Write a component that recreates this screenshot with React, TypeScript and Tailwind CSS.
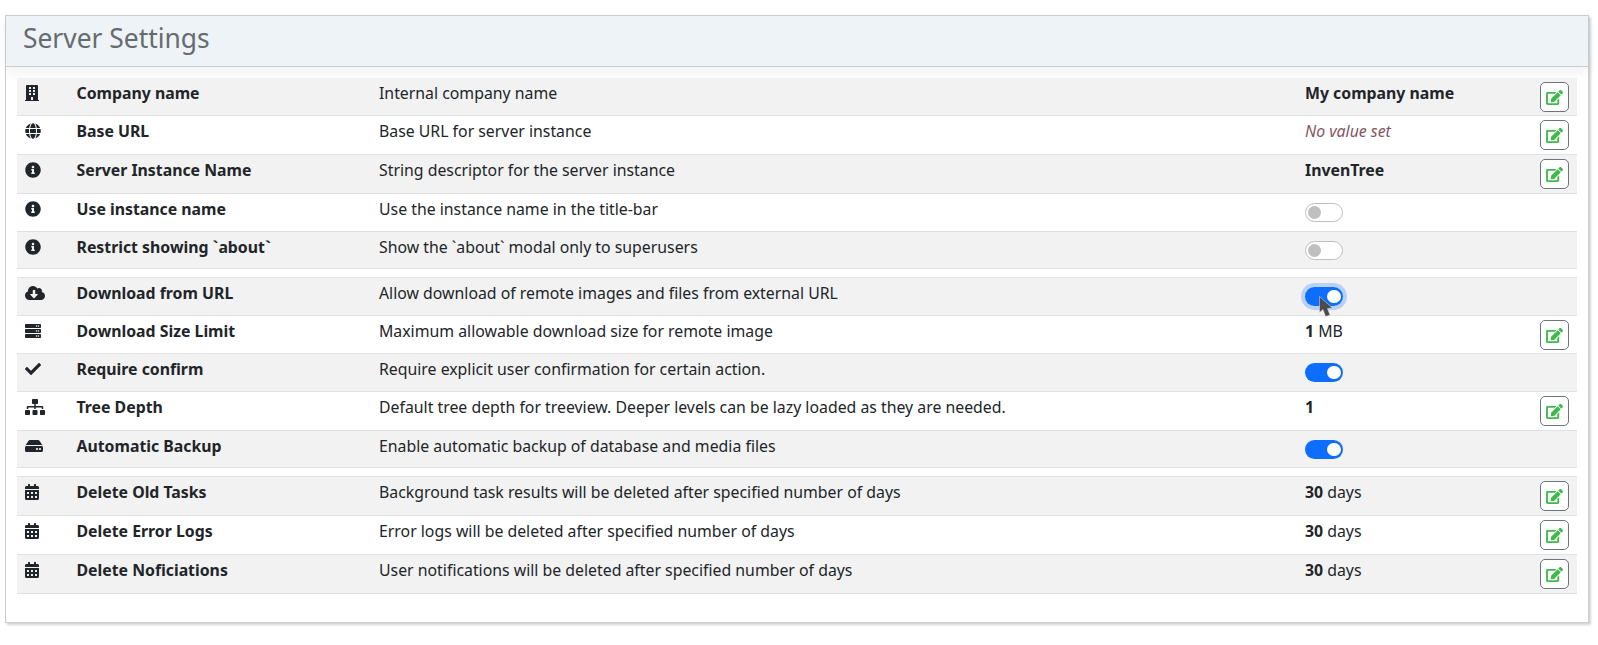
import React from "react";
import { FaBuilding, FaGlobe, FaInfoCircle, FaCloudDownloadAlt, FaServer, FaCheck, FaSitemap, FaHdd, FaCalendarAlt, FaEdit } from "react-icons/fa";

type Row = {
  icon: React.ComponentType<{ className?: string }>;
  iw: string;
  name: string;
  desc: string;
  value?: React.ReactNode;
  toggle?: "off" | "on" | "focus";
  edit?: boolean;
  h: string;
};

const B = ({ children }: { children: React.ReactNode }) => <span className="font-bold">{children}</span>;

const groups: Row[][] = [
  [
    { icon: FaBuilding, iw: "w-[14px]", name: "Company name", desc: "Internal company name", value: <B>My company name</B>, edit: true, h: "h-[38px]" },
    { icon: FaGlobe, iw: "w-[16px]", name: "Base URL", desc: "Base URL for server instance", value: <i className="text-[#85565f]">No value set</i>, edit: true, h: "h-[39px]" },
    { icon: FaInfoCircle, iw: "w-[16px]", name: "Server Instance Name", desc: "String descriptor for the server instance", value: <B>InvenTree</B>, edit: true, h: "h-[39px]" },
    { icon: FaInfoCircle, iw: "w-[16px]", name: "Use instance name", desc: "Use the instance name in the title-bar", toggle: "off", h: "h-[38px]" },
    { icon: FaInfoCircle, iw: "w-[16px]", name: "Restrict showing `about`", desc: "Show the `about` modal only to superusers", toggle: "off", h: "h-[37px]" },
  ],
  [
    { icon: FaCloudDownloadAlt, iw: "w-[20px]", name: "Download from URL", desc: "Allow download of remote images and files from external URL", toggle: "focus", h: "h-[38px]" },
    { icon: FaServer, iw: "w-[16px]", name: "Download Size Limit", desc: "Maximum allowable download size for remote image", value: <><B>1</B> MB</>, edit: true, h: "h-[38px]" },
    { icon: FaCheck, iw: "w-[16px]", name: "Require confirm", desc: "Require explicit user confirmation for certain action.", toggle: "on", h: "h-[38px]" },
    { icon: FaSitemap, iw: "w-[20px]", name: "Tree Depth", desc: "Default tree depth for treeview. Deeper levels can be lazy loaded as they are needed.", value: <B>1</B>, edit: true, h: "h-[39px]" },
    { icon: FaHdd, iw: "w-[18px]", name: "Automatic Backup", desc: "Enable automatic backup of database and media files", toggle: "on", h: "h-[37px]" },
  ],
  [
    { icon: FaCalendarAlt, iw: "w-[14px]", name: "Delete Old Tasks", desc: "Background task results will be deleted after specified number of days", value: <><B>30</B> days</>, edit: true, h: "h-[39px]" },
    { icon: FaCalendarAlt, iw: "w-[14px]", name: "Delete Error Logs", desc: "Error logs will be deleted after specified number of days", value: <><B>30</B> days</>, edit: true, h: "h-[39px]" },
    { icon: FaCalendarAlt, iw: "w-[14px]", name: "Delete Noficiations", desc: "User notifications will be deleted after specified number of days", value: <><B>30</B> days</>, edit: true, h: "h-[39px]" },
  ],
];

function Toggle({ state }: { state: "off" | "on" | "focus" }) {
  if (state === "off") {
    return (
      <div className="mt-[5px] flex h-[19px] w-[38px] items-center rounded-full border border-[#bfbfbf] bg-white pl-[1.5px]">
        <div className="h-[13.5px] w-[13.5px] rounded-full bg-[#bfbfbf]" />
      </div>
    );
  }
  return (
    <div className={`relative mt-[5px] flex h-[19px] w-[38px] items-center justify-end rounded-full bg-[#0d6efd] pr-[2.5px] ${state === "focus" ? "shadow-[0_0_0_4px_rgba(13,110,253,0.25)]" : ""}`}>
      <div className="h-[13.5px] w-[13.5px] rounded-full bg-white" />
      {state === "focus" && (
        <svg className="absolute left-[14px] top-[9px]" width="14" height="22" viewBox="0 0 14 22">
          <path d="M0.5 0.5 L0.5 16.5 L4 13.5 L6.5 20.5 L11 19 L8.5 12.5 L13.5 12 Z" fill="#4a4a4a" stroke="#e8e8e8" strokeWidth="0.5" />
        </svg>
      )}
    </div>
  );
}

function SettingRow({ row, odd }: { row: Row; odd: boolean }) {
  const Icon = row.icon;
  return (
    <div className={`flex ${row.h} border-b border-[#dee2e6] pt-1 ${odd ? "bg-[#f2f2f2]" : "bg-white"}`}>
      <div className="w-[59.5px] pl-2 pt-[3px] text-[#212529]">
        <Icon className={`h-[16px] ${row.iw}`} />
      </div>
      <div className="w-[302.5px] font-bold">{row.name}</div>
      <div className="w-[926px]">{row.desc}</div>
      <div className="w-[235px]">
        {row.value}
        {row.toggle && <Toggle state={row.toggle} />}
      </div>
      {row.edit && (
        <div className="flex h-[30px] w-[29px] items-center justify-center rounded-[5px] border border-[#6c757d] bg-white">
          <FaEdit className="h-[15px] w-[17px] text-[#40b94b]" />
        </div>
      )}
    </div>
  );
}

export default function App() {
  return (
    <div className="h-[645px] bg-white pl-[5px] pr-[9px] pt-[15px] text-[15.84px] leading-[22px] text-[#212529] [font-family:'Noto_Sans',sans-serif]">
      <div className="h-[608px] border border-[#ccc] shadow-[2px_2px_2px_#d4d4d4]">
        <div className="flex h-[51px] items-center border-b border-[#ccc] bg-[#eef3f7] pb-[7px] pl-[17px] text-[26.4px] text-[#666b70] shadow-[0_6px_10px_rgba(0,0,0,0.05)]">
          Server Settings
        </div>
        <div className="flex flex-col gap-[8px] px-[11px] pt-[11px]">
          {groups.map((g, i) => (
            <div key={i} className={i > 0 ? "border-t border-[#dee2e6]" : ""}>
              {g.map((r, j) => (
                <SettingRow key={r.name} row={r} odd={j % 2 === 0} />
              ))}
            </div>
          ))}
        </div>
      </div>
    </div>
  );
}
